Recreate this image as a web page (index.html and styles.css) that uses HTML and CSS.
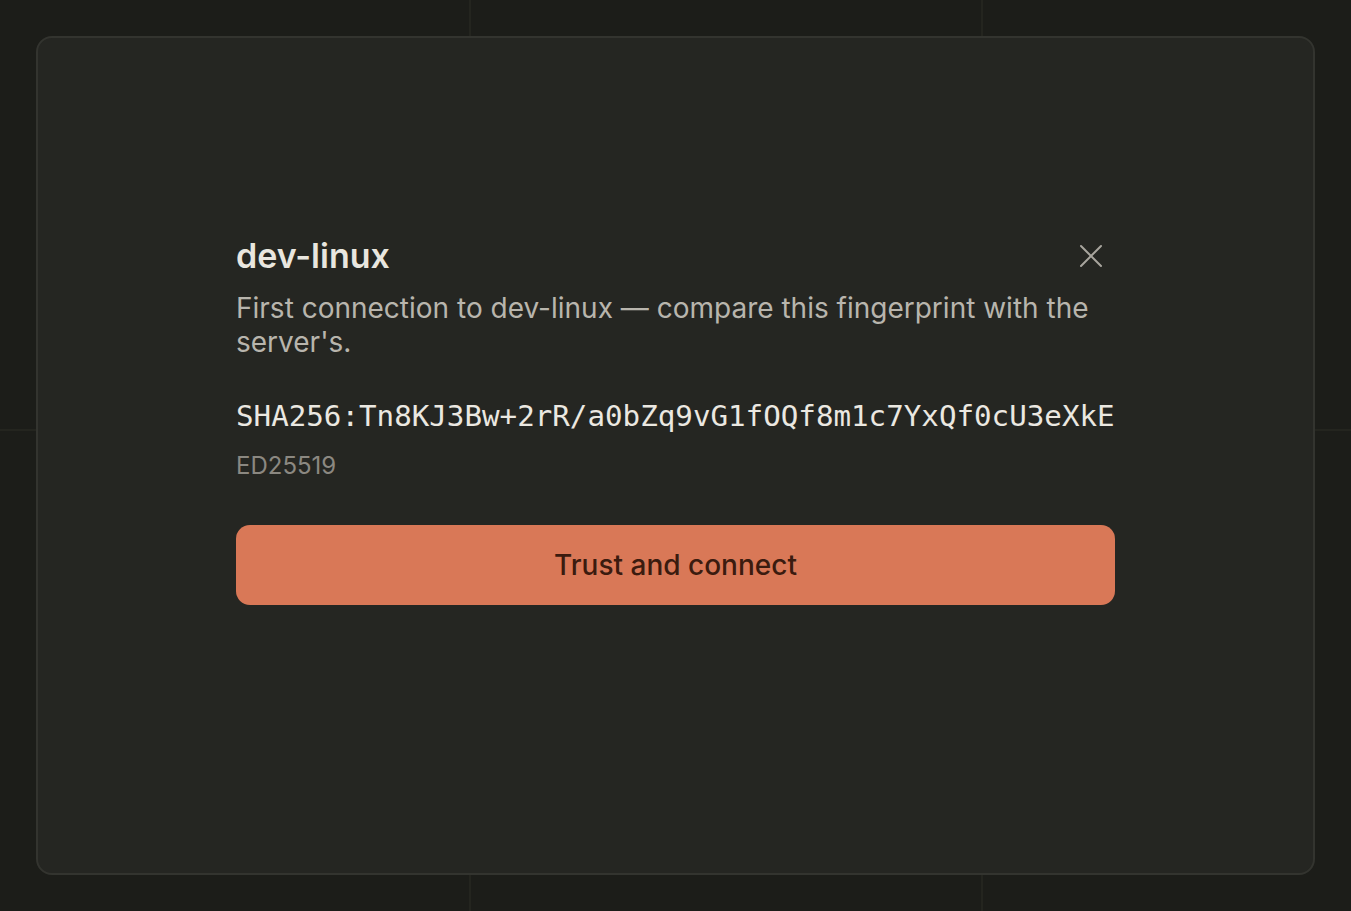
FILE: index.html
```html
<!DOCTYPE html>
<html lang="en">
<head>
<meta charset="utf-8">
<title>dev-linux</title>
<link rel="stylesheet" href="styles.css">
</head>
<body>
<div class="stage">
  <div class="card">
    <div class="dialog">
      <div class="header">
        <h1 class="title">dev-linux</h1>
        <button class="close" aria-label="Close">
          <svg width="24" height="24" viewBox="0 0 24 24" fill="none" stroke="currentColor" stroke-width="2" stroke-linecap="round"><path d="M2 2L22 22M22 2L2 22"/></svg>
        </button>
      </div>
      <p class="desc">First connection to dev-linux — compare this fingerprint with the server's.</p>
      <div class="fingerprint">SHA256:Tn8KJ3Bw+2rR/a0bZq9vG1fOQf8m1c7YxQf0cU3eXkE</div>
      <div class="algo">ED25519</div>
      <button class="trust">Trust and connect</button>
    </div>
  </div>
</div>
</body>
</html>
```
FILE: styles.css
```css
html, body {
  margin: 0;
  padding: 0;
  height: 100%;
}
body {
  background-color: #1c1d19;
  background-image:
    linear-gradient(to right, transparent 469px, #24251f 469px, #24251f 471px, transparent 471px),
    linear-gradient(to bottom, transparent 429px, #24251f 429px, #24251f 431px, transparent 431px);
  background-size: 512px 100%, 100% 911px;
  background-repeat: repeat-x, no-repeat;
  font-family: Inter, "Noto Sans", sans-serif;
}
.stage {
  padding: 36px;
  height: 911px;
  box-sizing: border-box;
}
.card {
  height: 100%;
  box-sizing: border-box;
  background: #252622;
  border: 2px solid #33342f;
  border-radius: 16px;
  display: flex;
  justify-content: center;
  padding-top: 196px;
}
.dialog {
  width: 879px;
  display: flex;
  flex-direction: column;
}
.header {
  display: flex;
  justify-content: space-between;
  align-items: center;
}
.title {
  margin: 0;
  font-size: 34px;
  font-weight: 600;
  color: #e9e6df;
  line-height: 44px;
}
.close {
  background: none;
  border: none;
  padding: 0;
  margin-right: 12px;
  width: 24px;
  height: 24px;
  color: #a8a59e;
  display: flex;
  cursor: pointer;
}
.desc {
  margin: 13px 0 0;
  font-size: 28px;
  line-height: 34px;
  color: #b8b5ad;
}
.fingerprint {
  margin-top: 39px;
  font-family: "DejaVu Sans Mono", monospace;
  font-size: 29.2px;
  line-height: 36px;
  color: #ebe8e1;
  white-space: nowrap;
}
.algo {
  margin-top: 17px;
  font-size: 24px;
  line-height: 30px;
  color: #8b8881;
}
.trust {
  margin-top: 44px;
  height: 80px;
  border: none;
  border-radius: 14px;
  background: #d97857;
  color: #3b1b0f;
  font-family: Inter, "Noto Sans", sans-serif;
  font-size: 28px;
  font-weight: 500;
  cursor: pointer;
}
```
